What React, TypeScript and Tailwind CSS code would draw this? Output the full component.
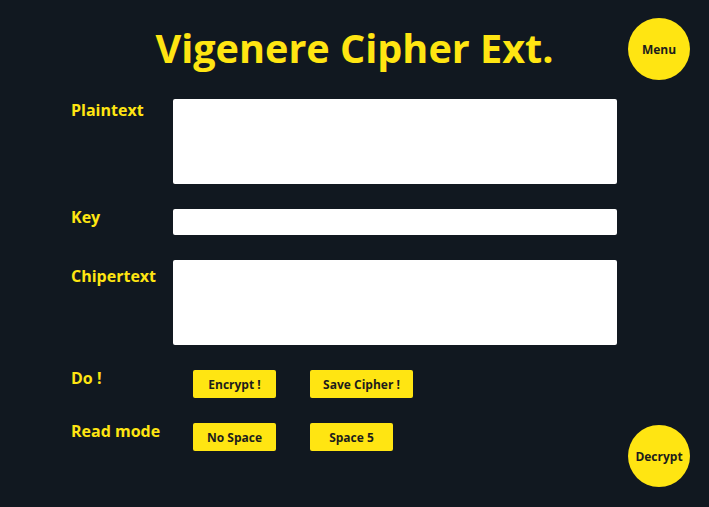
import React from "react";

const font = { fontFamily: '"Open Sans", "Noto Sans", sans-serif' };

function Btn({ children, w }: { children: React.ReactNode; w: string }) {
  return (
    <button
      className={`${w} h-[28px] rounded-[2px] bg-[#ffe512] pt-[2px] text-[12px] font-bold leading-none text-[#1c1c1c]`}
    >
      {children}
    </button>
  );
}

export default function App() {
  return (
    <div
      className="relative h-[507px] w-full overflow-hidden bg-[#111820] text-[#ffe512]"
      style={font}
    >
      <div className="flex justify-center pt-[28px]">
        <h1 className="text-[39.6px] font-bold leading-[40px] text-[#ffe512]">
          Vigenere Cipher Ext.
        </h1>
      </div>

      <button className="absolute left-[628px] top-[18px] flex h-[62px] w-[62px] items-center justify-center rounded-full bg-[#ffe512] pt-[2px] text-[12px] font-bold text-[#1c1c1c]">
        Menu
      </button>

      <div className="mt-[31px] grid grid-cols-[102px_444px] items-start gap-y-[25px] pl-[71px]">
        <label className="mt-[3px] text-[16px] font-bold leading-[16px]">Plaintext</label>
        <textarea className="block h-[85px] w-[444px] resize-none rounded-[2px] bg-white" />

        <label className="mt-0 text-[16px] font-bold leading-[16px]">Key</label>
        <input className="block h-[26px] w-[444px] rounded-[2px] bg-white" />

        <label className="mt-[8px] text-[16px] font-bold leading-[16px]">Chipertext</label>
        <textarea className="block h-[85px] w-[444px] resize-none rounded-[2px] bg-white" />

        <label className="mt-0 text-[16px] font-bold leading-[16px]">Do !</label>
        <div className="flex gap-[34px] pl-[20px]">
          <Btn w="w-[83px]">Encrypt !</Btn>
          <Btn w="w-[103px]">Save Cipher !</Btn>
        </div>

        <label className="mt-0 text-[16px] font-bold leading-[16px]">Read mode</label>
        <div className="flex gap-[34px] pl-[20px]">
          <Btn w="w-[83px]">No Space</Btn>
          <Btn w="w-[83px]">Space 5</Btn>
        </div>
      </div>

      <button className="absolute left-[628px] top-[425px] flex h-[62px] w-[62px] items-center justify-center rounded-full bg-[#ffe512] pt-[2px] text-[12px] font-bold text-[#1c1c1c]">
        Decrypt
      </button>
    </div>
  );
}
